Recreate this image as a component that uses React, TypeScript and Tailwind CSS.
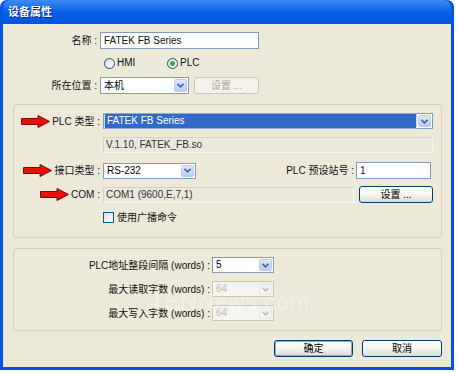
import React from 'react';

const font = { fontFamily: '"Liberation Sans", "Noto Sans CJK SC", sans-serif' };

function RedArrow() {
  return (
    <svg width="29" height="13" viewBox="0 0 29 13" className="shrink-0">
      <path d="M0.5 3.5 H17 V0.5 L28.5 6.5 L17 12.5 V9.5 H0.5 Z" fill="#E8100C" stroke="#7A0A08" strokeWidth="1" />
    </svg>
  );
}

function Chevron({ disabled }: { disabled?: boolean }) {
  return (
    <svg width="7" height="5" viewBox="0 0 7 5">
      <path d="M0.5 0.8 L3.5 3.8 L6.5 0.8" fill="none" stroke={disabled ? '#C3C3C3' : '#4D6185'} strokeWidth="1.6" />
    </svg>
  );
}

function Select({ value, width, disabled, highlight, tall }: { value: string; width: string; disabled?: boolean; highlight?: boolean; tall?: boolean }) {
  return (
    <div
      className={`flex ${tall ? 'h-[17px]' : 'h-[16px]'} items-stretch border ${disabled ? 'border-[#C9C7BA] bg-[#F4F3EE]' : 'border-[#7F9DB9] bg-white'} ${width}`}
    >
      <div className="flex flex-1 items-center px-[1px]">
        <span
          className={`flex h-full flex-1 items-center pl-[2px] leading-none ${
            highlight ? 'bg-[#316AC5] text-white outline outline-1 outline-dotted outline-[#9CB7E8]' : disabled ? 'text-[#C3C1B5]' : 'text-black'
          }`}
        >
          {value}
        </span>
      </div>
      <div
        className={`m-[1px] flex w-[13px] items-center justify-center rounded-[2px] border ${
          disabled ? 'border-[#E6E5DE] bg-[#F2F1EB]' : 'border-[#B9CBF1] bg-gradient-to-b from-[#DDE7FD] to-[#B7CBF6]'
        }`}
      >
        <Chevron disabled={disabled} />
      </div>
    </div>
  );
}

function Input({ value, width }: { value: string; width: string }) {
  return (
    <div className={`flex h-[17px] items-center border border-[#7F9DB9] bg-white pl-[3px] leading-none ${width}`}>{value}</div>
  );
}

function ReadOnly({ value, width }: { value: string; width: string }) {
  return (
    <div className={`flex h-[16px] items-center border-l border-t border-[#D6D3C4] border-b border-r border-b-[#F6F5EF] border-r-[#F6F5EF] bg-[#EBE9DB] pl-[2px] leading-none text-[#333] ${width}`}>
      {value}
    </div>
  );
}

function Button({ label, width, disabled, primary }: { label: string; width: string; disabled?: boolean; primary?: boolean }) {
  return (
    <div
      className={`flex h-[17px] items-center justify-center rounded-[3px] border leading-none ${width} ${
        disabled
          ? 'border-[#C9C7BA] bg-[#F3F2EC] text-[#ACA899]'
          : 'border-[#003C74] bg-gradient-to-b from-white via-[#F4F4F0] to-[#DCDBD3] text-black'
      } ${primary ? 'shadow-[inset_0_0_0_1px_#84A8E8]' : ''}`}
    >
      {label}
    </div>
  );
}

function Radio({ label, checked }: { label: string; checked?: boolean }) {
  return (
    <div className="flex items-center gap-[2px]">
      <div className="flex h-[11px] w-[11px] items-center justify-center rounded-full border border-[#1C5180] bg-gradient-to-br from-[#DCDCD6] to-white">
        {checked && <div className="h-[5px] w-[5px] rounded-full bg-[#3BAE32]" />}
      </div>
      <span className="leading-none">{label}</span>
    </div>
  );
}

export default function App() {
  return (
    <div className="relative h-[373px] w-[457px] bg-white text-[10px] text-[#111]" style={font}>
      <div className="flex h-[370px] w-[454px] flex-col rounded-t-[7px] bg-[#0054E3] px-[3px] pb-[3px]">
        {/* title bar */}
        <div className="flex h-[24px] items-center rounded-t-[7px] bg-gradient-to-b from-[#3B8CF5] via-[#0861E6] to-[#0054E3] pl-[5px]">
          <span className="text-[11px] font-bold text-white [text-shadow:1px_1px_0_#0A1E7A]">设备属性</span>
        </div>

        <div className="flex flex-1 flex-col bg-[#ECE9D8] pt-[8px]">
          {/* name */}
          <div className="flex items-center">
            <div className="w-[97px] pr-[3px] text-right">名称 :</div>
            <Input value="FATEK FB Series" width="w-[159px]" />
          </div>

          <div className="mt-[7px] flex h-[14px] items-center pl-[101px]">
            <div className="w-[63px]">
              <Radio label="HMI" />
            </div>
            <Radio label="PLC" checked />
          </div>

          <div className="mt-[7px] flex items-center">
            <div className="w-[97px] pr-[3px] text-right">所在位置 :</div>
            <Select value="本机" width="w-[89px]" tall />
            <div className="ml-[5px]">
              <Button label="设置 ..." width="w-[65px]" disabled />
            </div>
          </div>

          {/* group 1 */}
          <div className="ml-[10px] mt-[10px] flex h-[134px] w-[429px] flex-col rounded-[3px] border border-[#D0D0BF] pt-[8px]">
            <div className="flex items-center">
              <div className="flex w-[89px] items-center justify-end gap-[2px] pr-[3px]">
                <RedArrow />
                <span>PLC 类型 :</span>
              </div>
              <Select value="FATEK FB Series" width="w-[330px]" highlight />
            </div>
            <div className="mt-[8px] flex items-center pl-[89px]">
              <ReadOnly value="V.1.10, FATEK_FB.so" width="w-[330px]" />
            </div>
            <div className="mt-[9px] flex items-center">
              <div className="flex w-[89px] items-center justify-end gap-[2px] pr-[3px]">
                <RedArrow />
                <span>接口类型 :</span>
              </div>
              <Select value="RS-232" width="w-[93px]" />
              <div className="flex-1 pr-[2px] text-right">PLC 预设站号 :</div>
              <div className="mr-[10px]">
                <Input value="1" width="w-[75px]" />
              </div>
            </div>
            <div className="mt-[7px] flex items-center">
              <div className="flex w-[89px] items-center justify-end gap-[2px] pr-[3px]">
                <RedArrow />
                <span>COM :</span>
              </div>
              <ReadOnly value="COM1 (9600,E,7,1)" width="w-[251px]" />
              <div className="ml-[5px]">
                <Button label="设置 ..." width="w-[74px]" />
              </div>
            </div>
            <div className="mt-[9px] flex items-center gap-[3px] pl-[89px]">
              <div className="h-[11px] w-[11px] border border-[#1C5180] bg-gradient-to-br from-[#DCDCD6] to-white" />
              <span className="leading-none">使用广播命令</span>
            </div>
          </div>

          {/* group 2 */}
          <div className="ml-[10px] mt-[10px] flex h-[83px] w-[429px] flex-col gap-[8px] rounded-[3px] border border-[#D0D0BF] pt-[8px]">
            <div className="flex items-center">
              <div className="w-[198px] pr-[2px] text-right">PLC地址整段间隔 (words) :</div>
              <Select value="5" width="w-[62px]" />
            </div>
            <div className="flex items-center">
              <div className="w-[198px] pr-[2px] text-right">最大读取字数 (words) :</div>
              <Select value="64" width="w-[62px]" disabled />
            </div>
            <div className="flex items-center">
              <div className="w-[198px] pr-[2px] text-right">最大写入字数 (words) :</div>
              <Select value="64" width="w-[62px]" disabled />
            </div>
          </div>

          <div className="mt-[9px] flex justify-end gap-[9px] pr-[9px]">
            <Button label="确定" width="w-[79px]" primary />
            <Button label="取消" width="w-[80px]" />
          </div>
        </div>
      </div>

      <div className="pointer-events-none absolute left-[150px] top-[285px] text-[23px] tracking-wide text-white/35">
        TENNews.com
      </div>
    </div>
  );
}
